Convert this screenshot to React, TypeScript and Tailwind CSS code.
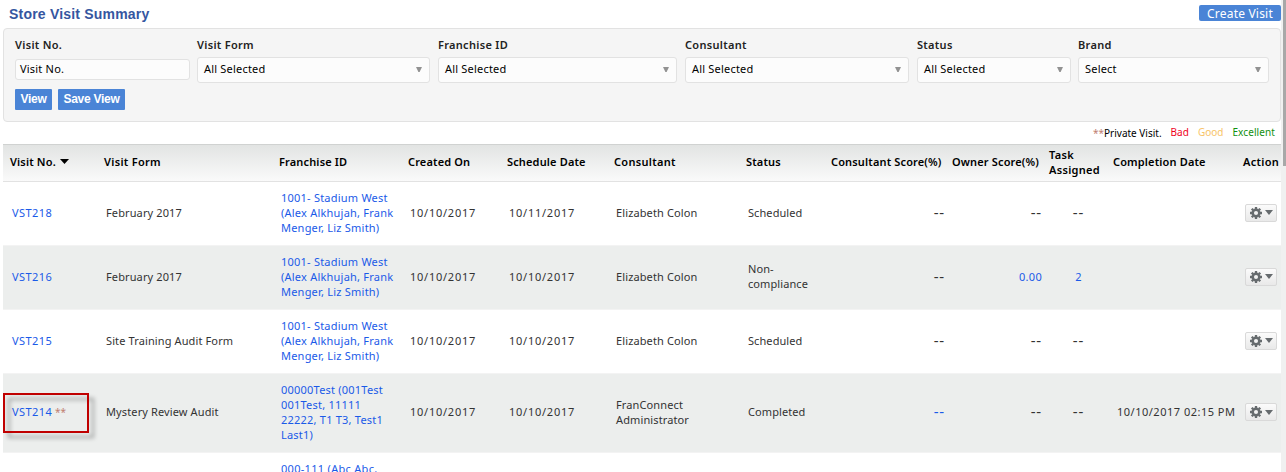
import React from 'react';
import { clsx } from 'clsx';

interface Visit {
  id: string;
  isPrivate?: boolean;
  form: string;
  franchise: string[];
  created: string;
  scheduled: string;
  consultant: string[];
  status: string[];
  consultantScore: string;
  ownerScore: string;
  tasks: string;
  completed?: string;
}

const stadiumWest = ['1001- Stadium West', '(Alex Alkhujah, Frank', 'Menger, Liz Smith)'];

const visits: Visit[] = [
  {
    id: 'VST218',
    form: 'February 2017',
    franchise: stadiumWest,
    created: '10/10/2017',
    scheduled: '10/11/2017',
    consultant: ['Elizabeth Colon'],
    status: ['Scheduled'],
    consultantScore: '--',
    ownerScore: '--',
    tasks: '--',
  },
  {
    id: 'VST216',
    form: 'February 2017',
    franchise: stadiumWest,
    created: '10/10/2017',
    scheduled: '10/10/2017',
    consultant: ['Elizabeth Colon'],
    status: ['Non-', 'compliance'],
    consultantScore: '--',
    ownerScore: '0.00',
    tasks: '2',
  },
  {
    id: 'VST215',
    form: 'Site Training Audit Form',
    franchise: stadiumWest,
    created: '10/10/2017',
    scheduled: '10/10/2017',
    consultant: ['Elizabeth Colon'],
    status: ['Scheduled'],
    consultantScore: '--',
    ownerScore: '--',
    tasks: '--',
  },
  {
    id: 'VST214',
    isPrivate: true,
    form: 'Mystery Review Audit',
    franchise: ['00000Test (001Test', '001Test, 11111', '22222, T1 T3, Test1', 'Last1)'],
    created: '10/10/2017',
    scheduled: '10/10/2017',
    consultant: ['FranConnect', 'Administrator'],
    status: ['Completed'],
    consultantScore: '--',
    ownerScore: '--',
    tasks: '--',
    completed: '10/10/2017 02:15 PM',
  },
];

const filters = [
  { label: 'Visit Form', value: 'All Selected', width: 'w-[233px] mr-2' },
  { label: 'Franchise ID', value: 'All Selected', width: 'w-[239px] mr-2' },
  { label: 'Consultant', value: 'All Selected', width: 'w-[224px] mr-2' },
  { label: 'Status', value: 'All Selected', width: 'w-[154px] mr-[7px]' },
  { label: 'Brand', value: 'Select', width: 'w-[191px]' },
];

const columns =
  'grid grid-cols-[94px_175px_129px_99px_107px_132px_85px_121px_97px_64px_130px_45px]';

const Lines = ({ items, className }: { items: string[]; className?: string }) => (
  <div className={clsx('pl-[9px] whitespace-nowrap', className)}>
    {items.map((line) => (
      <div key={line}>{line}</div>
    ))}
  </div>
);

// Empty scores are shown as a pair of wide dashes
const Score = ({ value, linked, className }: { value: string; linked?: boolean; className: string }) => (
  <div
    className={clsx(
      className,
      value === '--' && 'text-[15px] leading-[15px] tracking-[0.8px]',
      (linked || value !== '--') && 'text-[#1a5ae8]'
    )}
  >
    {value}
  </div>
);

const ActionButton = () => (
  <button className="mt-[0.5px] ml-[9px] flex h-[18px] w-8 items-center rounded-[2px] border border-[#d9d9d9] bg-linear-to-b from-[#fbfbfb] to-[#e9e9e9] pl-1">
    <svg width="12" height="12" viewBox="0 0 12 12" fill="none" stroke="#666b6e">
      <circle cx="6" cy="6" r="3.3" strokeWidth="2.5" />
      <path
        d="M6 0v2M6 10v2M0 6h2M10 6h2M1.76 1.76l1.4 1.4M8.84 8.84l1.4 1.4M1.76 10.24l1.4-1.4M8.84 3.16l1.4-1.4"
        strokeWidth="2.3"
      />
    </svg>
    <svg className="ml-[3px]" width="8" height="5" viewBox="0 0 8 5" fill="#666b6e">
      <path d="M0 0h8L4 5z" />
    </svg>
  </button>
);

const FilterPanel = () => (
  <section className="mt-[7px] h-[94px] rounded-[4px] border border-[#e2e2e2] bg-[#f5f5f5] pl-[11px] pt-2">
    <div className="flex tracking-[0.2px] text-[#222]">
      <div className="mr-[7px] w-[175px]">
        <div className="h-[22px] font-semibold leading-4 tracking-[0.3px]">Visit No.</div>
        <div className="h-[21px] rounded-[3px] border border-[#e2e2e2] bg-[#fcfcfc] pl-1 leading-[17px] text-black">
          Visit No.
        </div>
      </div>
      {filters.map((filter) => (
        <div key={filter.label} className={filter.width}>
          <div className="h-5 font-semibold leading-4 tracking-[0.3px]">{filter.label}</div>
          <div className="flex h-[26px] items-center justify-between rounded-[3px] border border-[#e2e2e2] bg-[#fcfcfc] pl-1.5 pr-[7px] text-black">
            <span className="-mt-1">{filter.value}</span>
            <svg className="-mt-0.5" width="6" height="5" viewBox="0 0 6 5" fill="#929292">
              <path d="M0 0h6L3.6 5H2.4z" />
            </svg>
          </div>
        </div>
      ))}
    </div>
    <div className="mt-1.5 flex gap-1.5 font-['Liberation_Sans',sans-serif] text-[12px] font-bold leading-[19px] tracking-[-0.25px] text-white">
      <button className="h-[21px] w-[37px] rounded-[1px] bg-[#4a84d6]">View</button>
      <button className="h-[21px] w-[67px] rounded-[1px] bg-[#4a84d6]">Save View</button>
    </div>
  </section>
);

const VisitRow = ({ visit, striped }: { visit: Visit; striped: boolean }) => (
  <div
    className={clsx(
      columns,
      'relative items-center border-b border-[#f3f3f3] pt-[7.75px] pb-[10.25px] text-[#333]',
      striped && 'bg-[#eceeed]'
    )}
  >
    <div className="pl-[9px] tracking-[0.45px] text-[#1a5ae8]">
      {visit.id}
      {visit.isPrivate && <span className="text-[10px] tracking-normal text-[#c08070]"> **</span>}
    </div>
    <Lines items={[visit.form]} className="tracking-[0.12px]" />
    <Lines items={visit.franchise} className="tracking-[0.22px] text-[#1a5ae8]" />
    <Lines items={[visit.created]} className="tracking-[0.75px]" />
    <Lines items={[visit.scheduled]} className="tracking-[0.75px]" />
    <Lines items={visit.consultant} className="tracking-[0.12px]" />
    <Lines items={visit.status} className="tracking-[0.08px]" />
    <Score value={visit.consultantScore} linked={visit.isPrivate} className="text-right" />
    <Score value={visit.ownerScore} className="text-right" />
    <Score value={visit.tasks} className="pl-[9px] text-center" />
    <div className="pl-[11px] tracking-[0.5px] whitespace-nowrap">{visit.completed}</div>
    <ActionButton />
    {visit.isPrivate && (
      <div className="absolute left-0 top-[19px] h-10 w-[86px] border-2 border-[#c00000] drop-shadow-[5px_5px_2px_rgba(0,0,0,0.35)]" />
    )}
  </div>
);

const App = () => (
  <div className="flex h-[472px] overflow-hidden bg-white font-['Noto_Sans',sans-serif] text-[11px] leading-[15px] tracking-[0.3px]">
    <main className="ml-[3px] w-[1278px]">
      <header className="flex h-[21px] justify-between">
        <h1 className="pl-1.5 pt-1.5 font-['Liberation_Sans',sans-serif] text-[14px] font-bold leading-4 tracking-[0.2px] text-[#3556a0]">
          Store Visit Summary
        </h1>
        <button className="mt-[5px] h-4 w-[82px] rounded-[2px] bg-[#4a84d6] pt-px text-[12px] leading-4 tracking-[0.2px] text-white">
          Create Visit
        </button>
      </header>
      <FilterPanel />
      <div className="flex h-[22px] justify-end pr-1.5 pt-[3px] text-[10px] tracking-normal">
        <span className="mr-[9px] pt-px text-black">
          <span className="text-[#c08070]">**</span>Private Visit.
        </span>
        <span className="mr-[9px] text-[#f0001c]">Bad</span>
        <span className="mr-[9px] text-[#f8c468]">Good</span>
        <span className="tracking-[0.1px] text-[#109010]">Excellent</span>
      </div>
      <div
        className={clsx(
          columns,
          'h-[38px] items-center border-y border-t-[#d0d2d1] border-b-[#e2e2e2] bg-linear-to-b from-[#e2e4e3] to-[#fafafa] pb-[2.5px] font-semibold tracking-[0.15px] whitespace-nowrap text-black *:pl-[7px]'
        )}
      >
        <div className="flex items-center gap-1">
          Visit No.
          <svg width="9" height="5" viewBox="0 0 9 5">
            <path d="M0 0h9L4.5 5z" />
          </svg>
        </div>
        <div className="tracking-[0.3px]">Visit Form</div>
        <div>Franchise ID</div>
        <div>Created On</div>
        <div>Schedule Date</div>
        <div className="tracking-[0.3px]">Consultant</div>
        <div>Status</div>
        <div>Consultant Score(%)</div>
        <div>Owner Score(%)</div>
        <div className="tracking-[0.3px]">
          Task
          <br />
          Assigned
        </div>
        <div>Completion Date</div>
        <div className="tracking-[0.3px]">Action</div>
      </div>
      {visits.map((visit, index) => (
        <VisitRow key={visit.id} visit={visit} striped={index % 2 === 1} />
      ))}
      <div className={clsx(columns, 'pt-2 text-[#1a5ae8]')}>
        <Lines items={['000-111 (Abc Abc,']} className="col-start-3" />
      </div>
    </main>
    <div className="flex w-[5px] justify-end bg-[#f0f0f0]">
      <div className="h-[166px] w-[3px] bg-[#a8a8a8]" />
    </div>
  </div>
);

export default App;
